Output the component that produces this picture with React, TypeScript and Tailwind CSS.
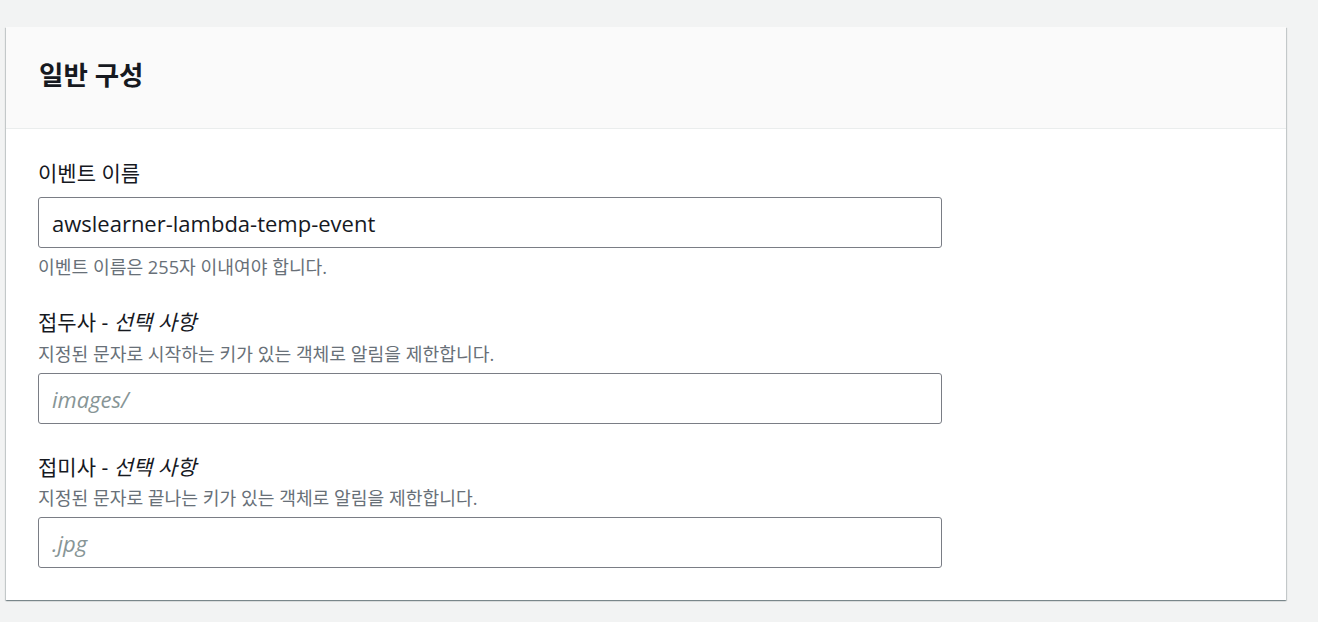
export default function App() {
  const font = { fontFamily: '"Open Sans", "Noto Sans CJK KR", sans-serif' }
  return (
    <div className="min-h-[622px] bg-[#f2f3f3] pt-[27px] pl-[6px] pr-[32px]" style={font}>
      <div className="w-[1280px] bg-white shadow-[0_1px_1px_0_rgba(0,28,36,0.3),1px_1px_1px_0_rgba(0,28,36,0.15),-1px_1px_1px_0_rgba(0,28,36,0.15)]">
        {/* Header */}
        <div className="flex h-[102px] items-center border-b border-[#eaeded] bg-[#fafafa] px-[33px] pb-[6px]">
          <h2 className="text-[26.5px] font-bold leading-[32px] text-[#16191f]">일반 구성</h2>
        </div>

        {/* Body */}
        <div className="px-[32px] pt-[30px] pb-[32px] text-[#16191f]">
          <div>
            <label className="block text-[21px] leading-[28px]">이벤트 이름</label>
            <input
              className="mt-[10px] block h-[51px] w-[904px] rounded-[3px] border border-[#7a7d85] bg-white px-[13px] text-[22px] font-medium text-[#16191f] outline-none"
              defaultValue="awslearner-lambda-temp-event"
              style={font}
            />
            <p className="mt-[7px] text-[18.2px] leading-[24px] text-[#687078]">
              이벤트 이름은 255자 이내여야 합니다.
            </p>
          </div>

          <div className="mt-[29px]">
            <label className="block text-[21px] leading-[28px]">
              접두사 - <i>선택 사항</i>
            </label>
            <p className="mt-[6px] text-[18.2px] leading-[24px] text-[#687078]">
              지정된 문자로 시작하는 키가 있는 객체로 알림을 제한합니다.
            </p>
            <input
              className="mt-[7px] block h-[51px] w-[904px] rounded-[3px] border border-[#7a7d85] bg-white px-[13px] text-[22px] italic text-[#16191f] outline-none placeholder:text-[#879596]"
              placeholder="images/"
              style={font}
            />
          </div>

          <div className="mt-[29px]">
            <label className="block text-[21px] leading-[28px]">
              접미사 - <i>선택 사항</i>
            </label>
            <p className="mt-[5px] text-[18.2px] leading-[24px] text-[#687078]">
              지정된 문자로 끝나는 키가 있는 객체로 알림을 제한합니다.
            </p>
            <input
              className="mt-[7px] block h-[51px] w-[904px] rounded-[3px] border border-[#7a7d85] bg-white px-[13px] text-[22px] italic text-[#16191f] outline-none placeholder:text-[#879596]"
              placeholder=".jpg"
              style={font}
            />
          </div>
        </div>
      </div>
    </div>
  )
}
